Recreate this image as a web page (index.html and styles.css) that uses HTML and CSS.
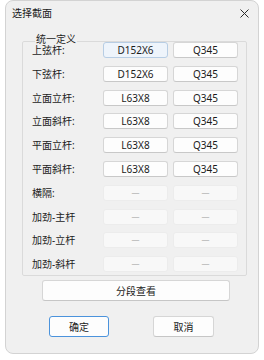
FILE: index.html
```html
<!DOCTYPE html>
<html lang="zh-CN">
<head>
<meta charset="utf-8">
<title>选择截面</title>
<link rel="stylesheet" href="styles.css">
</head>
<body>
<div class="window">
  <div class="titlebar">
    <span class="title">选择截面</span>
    <svg class="close" width="9" height="9" viewBox="0 0 9 9"><path d="M0.5 0.5L8.5 8.5M8.5 0.5L0.5 8.5" stroke="#2b2b2b" stroke-width="1" fill="none"/></svg>
  </div>
  <div class="content">
    <fieldset class="group">
      <legend class="legend">统一定义</legend>
      <div class="grid">
        <span class="label">上弦杆:</span><span class="box active">D152X6</span><span class="box">Q345</span>
        <span class="label">下弦杆:</span><span class="box">D152X6</span><span class="box">Q345</span>
        <span class="label">立面立杆:</span><span class="box">L63X8</span><span class="box">Q345</span>
        <span class="label">立面斜杆:</span><span class="box">L63X8</span><span class="box">Q345</span>
        <span class="label">平面立杆:</span><span class="box">L63X8</span><span class="box">Q345</span>
        <span class="label">平面斜杆:</span><span class="box">L63X8</span><span class="box">Q345</span>
        <span class="label">横隔:</span><span class="box disabled">—</span><span class="box disabled">—</span>
        <span class="label">加劲-主杆</span><span class="box disabled">—</span><span class="box disabled">—</span>
        <span class="label">加劲-立杆</span><span class="box disabled">—</span><span class="box disabled">—</span>
        <span class="label">加劲-斜杆</span><span class="box disabled">—</span><span class="box disabled">—</span>
      </div>
    </fieldset>
    <div class="btn wide">分段查看</div>
    <div class="actions">
      <div class="btn primary">确定</div>
      <div class="btn">取消</div>
    </div>
  </div>
</div>
</body>
</html>
```
FILE: styles.css
```css
html, body {
  margin: 0;
  padding: 0;
  background: #ffffff;
}
body {
  font-family: "Noto Sans", "Noto Sans CJK SC", sans-serif;
  font-size: 10px;
  color: #1b1b1b;
}
.window {
  box-sizing: border-box;
  margin-left: 5px;
  width: 254px;
  height: 354px;
  background: #f0f0f0;
  border: 1px solid #d3d3d3;
  border-radius: 8px;
  display: flex;
  flex-direction: column;
}
.titlebar {
  height: 24px;
  display: flex;
  align-items: center;
  justify-content: space-between;
  padding: 0 9px 0 6px;
}
.title {
  font-size: 10px;
  line-height: 12px;
  color: #1b1b1b;
}
.close {
  display: block;
}
.content {
  padding: 8px 11px 0 16px;
  display: flex;
  flex-direction: column;
}
.group {
  margin: 0;
  padding: 0 8px 3px 9px;
  border: 1px solid #dadada;
  border-radius: 2px;
  min-width: 0;
}
.legend {
  padding: 0 1px 5px;
  margin-left: 3px;
  font-size: 10px;
  line-height: 12px;
  color: #1b1b1b;
}
.grid {
  margin-top: -8px;
  display: grid;
  grid-template-columns: 66px 65px 65px;
  column-gap: 5px;
  grid-auto-rows: 16px;
  row-gap: 7.8px;
  align-items: center;
}
.label {
  font-size: 10px;
  line-height: 12px;
  color: #1b1b1b;
  white-space: nowrap;
}
.box {
  box-sizing: border-box;
  height: 16px;
  display: flex;
  align-items: center;
  justify-content: center;
  background: #fdfdfd;
  border: 1px solid #d6d6d6;
  border-bottom-color: #c8c8c8;
  border-radius: 3px;
  font-size: 10px;
  line-height: 12px;
  color: #1b1b1b;
}
.box.active {
  background: #eef4fb;
  border-color: #b7cde4;
}
.box.disabled {
  background: #f8f8f8;
  border-color: #ececec;
  color: #b3b3b3;
  font-size: 8px;
}
.btn {
  box-sizing: border-box;
  height: 21px;
  display: flex;
  align-items: center;
  justify-content: center;
  background: #fdfdfd;
  border: 1px solid #d6d6d6;
  border-bottom-color: #c6c6c6;
  border-radius: 3px;
  font-size: 10px;
  line-height: 12px;
  color: #1b1b1b;
}
.wide {
  margin: 4px 0 0 20px;
  width: 188px;
}
.actions {
  margin: 15px 0 0 27px;
  display: flex;
  gap: 44px;
}
.actions .btn {
  width: 61px;
  height: 21px;
}
.btn.primary {
  width: 60px;
  border: 1px solid #4b93dc;
}
```
